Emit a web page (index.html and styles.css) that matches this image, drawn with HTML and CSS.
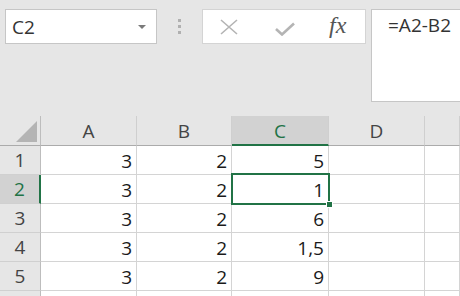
FILE: index.html
```html
<html>

<head>
    <link rel="stylesheet" href="styles.css">
</head>

<body>

    <div class="toolbar">
        <div class="namebox">
            <span class="name">C2</span>
            <span class="arrow"></span>
        </div>
        <div class="dots">
            <span></span><span></span><span></span>
        </div>
        <div class="fxbar">
            <svg class="icon-x" width="18" height="16" viewBox="0 0 18 16">
                <path d="M1 1 L17 15 M17 1 L1 15" stroke="#b4b4b4" stroke-width="1.6" fill="none" />
            </svg>
            <svg class="icon-check" width="20" height="14" viewBox="0 0 20 14">
                <path d="M1 7 L7 12.5 L19 1.5" stroke="#b4b4b4" stroke-width="2.6" fill="none" />
            </svg>
            <span class="fx">fx</span>
        </div>
        <div class="formula">=A2-B2</div>
    </div>

    <div class="sheet">
        <div class="corner"><span class="tri"></span></div>
        <div class="colhead">A</div>
        <div class="colhead">B</div>
        <div class="colhead active">C</div>
        <div class="colhead">D</div>
        <div class="colhead"></div>

        <div class="rowhead">1</div>
        <div class="cell">3</div>
        <div class="cell">2</div>
        <div class="cell">5</div>
        <div class="cell"></div>
        <div class="cell"></div>

        <div class="rowhead active">2</div>
        <div class="cell">3</div>
        <div class="cell">2</div>
        <div class="cell sel">1</div>
        <div class="cell"></div>
        <div class="cell"></div>

        <div class="rowhead">3</div>
        <div class="cell">3</div>
        <div class="cell">2</div>
        <div class="cell">6</div>
        <div class="cell"></div>
        <div class="cell"></div>

        <div class="rowhead">4</div>
        <div class="cell">3</div>
        <div class="cell">2</div>
        <div class="cell">1,5</div>
        <div class="cell"></div>
        <div class="cell"></div>

        <div class="rowhead">5</div>
        <div class="cell">3</div>
        <div class="cell">2</div>
        <div class="cell">9</div>
        <div class="cell"></div>
        <div class="cell"></div>

        <div class="rowhead"></div>
        <div class="cell"></div>
        <div class="cell"></div>
        <div class="cell"></div>
        <div class="cell"></div>
        <div class="cell"></div>
    </div>

</body>

</html>
```

FILE: styles.css
```css
body {
    margin: 0;
    width: 460px;
    height: 296px;
    overflow: hidden;
    background-color: #e6e6e6;
    font-family: "Open Sans", "Noto Sans", sans-serif;
    color: #222;
}

/* formula bar */

.toolbar {
    height: 116px;
    box-sizing: border-box;
    padding-top: 9px;
    display: flex;
    align-items: flex-start;
}

.namebox {
    margin-left: 5px;
    width: 152px;
    height: 35px;
    box-sizing: border-box;
    background-color: #fff;
    border: 1px solid #c6c6c6;
    display: flex;
    align-items: center;
    justify-content: space-between;
    padding: 0 10px 0 6px;
}

.name {
    font-size: 19px;
    color: #333;
}

.arrow {
    width: 0;
    height: 0;
    border-left: 4px solid transparent;
    border-right: 4px solid transparent;
    border-top: 4px solid #7a7a7a;
}

.dots {
    width: 45px;
    height: 35px;
    display: flex;
    flex-direction: column;
    align-items: center;
    justify-content: center;
    gap: 3px;
}

.dots span {
    width: 3px;
    height: 3px;
    background-color: #b0b0b0;
}

.fxbar {
    width: 164px;
    height: 35px;
    box-sizing: border-box;
    background-color: #fff;
    border: 1px solid #d4d4d4;
    display: flex;
    align-items: center;
    padding-left: 17px;
}

.icon-x {
    margin-right: 37px;
}

.icon-check {
    margin-right: 34px;
    margin-top: 4px;
}

.fx {
    font-family: "Liberation Serif", serif;
    font-style: italic;
    font-size: 24px;
    color: #555;
    margin-top: -2px;
}

.formula {
    flex: 1;
    margin-left: 5px;
    margin-right: -2px;
    height: 93px;
    box-sizing: border-box;
    background-color: #fff;
    border: 1px solid #c6c6c6;
    padding: 2px 0 0 16px;
    font-size: 19px;
    color: #333;
}

/* sheet grid */

.sheet {
    display: grid;
    grid-template-columns: 41px 96px 95px 97px 96px 1fr;
    grid-template-rows: 30px repeat(5, 29px) 6px;
    background-color: #fff;
}

.corner,
.colhead,
.rowhead {
    background-color: #e6e6e6;
    box-sizing: border-box;
    font-size: 19px;
    color: #444;
    display: flex;
    align-items: center;
    justify-content: center;
}

.corner {
    border-right: 1px solid #bdbdbd;
    border-bottom: 1px solid #ababab;
    align-items: flex-end;
    justify-content: flex-end;
    padding: 0 3px 3px 0;
}

.tri {
    width: 0;
    height: 0;
    border-left: 21px solid transparent;
    border-bottom: 21px solid #b4b4b4;
}

.colhead {
    border-right: 1px solid #cfcfcf;
    border-bottom: 1px solid #ababab;
    padding-top: 1px;
}

.colhead.active {
    background-color: #d2d2d2;
    color: #217346;
    border-bottom: 2px solid #217346;
}

.rowhead {
    border-right: 1px solid #bdbdbd;
    border-bottom: 1px solid #d0d0d0;
}

.rowhead.active {
    background-color: #d2d2d2;
    color: #217346;
    border-right: 2px solid #217346;
}

.cell {
    box-sizing: border-box;
    border-right: 1px solid #d4d4d4;
    border-bottom: 1px solid #d4d4d4;
    font-size: 19px;
    color: #1a1a1a;
    display: flex;
    align-items: center;
    justify-content: flex-end;
    padding: 1px 4px 0 0;
}

.cell.sel {
    position: relative;
}

.cell.sel::after {
    content: "";
    position: absolute;
    top: -2px;
    left: -1px;
    right: -2px;
    bottom: -2px;
    border: 2px solid #217346;
    z-index: 1;
}

.cell.sel::before {
    content: "";
    position: absolute;
    right: -5px;
    bottom: -5px;
    width: 5px;
    height: 5px;
    background-color: #217346;
    border: 1px solid #fff;
    z-index: 2;
}
```
